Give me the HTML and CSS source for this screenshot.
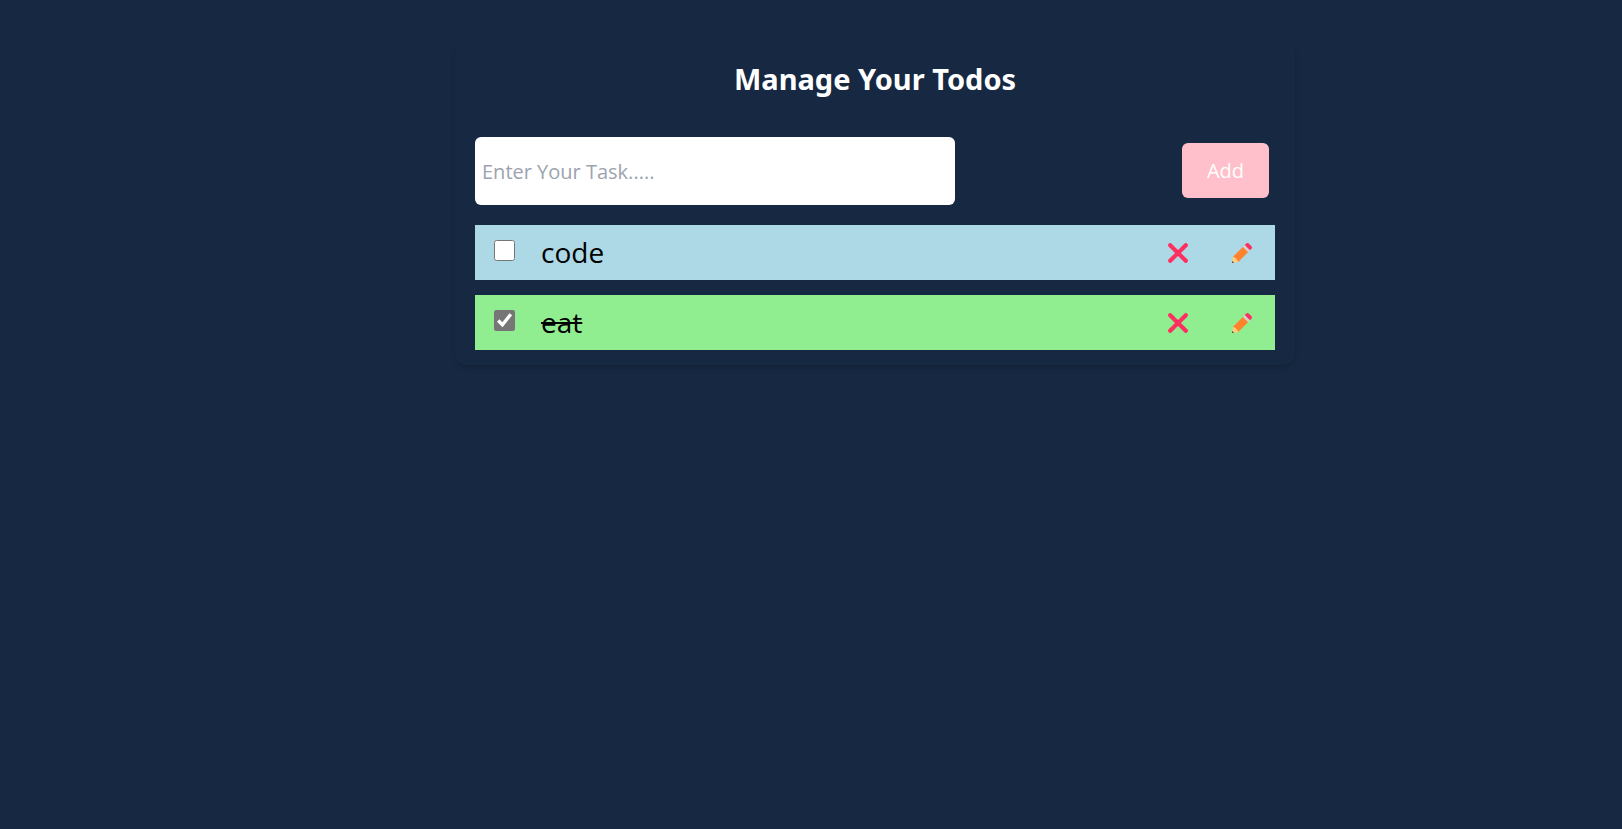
FILE: index.html
```html
<!DOCTYPE html>
<html lang="en">
<head>
<meta charset="utf-8">
<meta name="viewport" content="width=device-width, initial-scale=1">
<title>Manage Your Todos</title>
<link rel="stylesheet" href="styles.css">
</head>
<body>
<svg class="sprite" aria-hidden="true">
  <symbol id="cross" viewBox="0 0 20 20">
    <path d="M2.2 2.2 17.8 17.8M17.8 2.2 2.2 17.8" stroke="#ff2f5f" stroke-width="4.2" stroke-linecap="round"/>
  </symbol>
  <symbol id="pencil" viewBox="0 0 20 20">
    <path d="M0 20 1 14 3 12.4 7.6 17 6 19Z" fill="#ffce7c"/>
    <path d="M0 20 .4 18 2 19.6Z" fill="#402a32"/>
    <path d="M1 13.8 11 3.8 16.2 9 6.2 19Q5.9 17.3 4.3 15.7 2.7 14.1 1 13.8Z" fill="#ff822d"/>
    <path d="M10.9 3.9 13 1.8 18.2 7 16.1 9.1Z" fill="#d3d3d3"/>
    <path d="M12.8 2 14.2 .6Q15.6-.6 17 .7L19.3 3Q20.6 4.4 19.4 5.8L18 7.2Z" fill="#ff2f5f"/>
  </symbol>
</svg>
<main class="page">
  <section class="card">
    <h1 class="title">Manage Your Todos</h1>
    <form class="entry">
      <input class="entry-input" type="text" placeholder="Enter Your Task....." aria-label="Task">
      <button class="entry-add" type="button">Add</button>
    </form>
    <ul class="todos">
      <li class="todo">
        <input class="todo-check" type="checkbox" id="todo-code">
        <label class="todo-text" for="todo-code">code</label>
        <button class="todo-action" type="button" aria-label="Delete code"><svg class="icon"><use href="#cross"/></svg></button>
        <button class="todo-action" type="button" aria-label="Edit code"><svg class="icon"><use href="#pencil"/></svg></button>
      </li>
      <li class="todo todo-done">
        <input class="todo-check" type="checkbox" id="todo-eat" checked>
        <label class="todo-text" for="todo-eat">eat</label>
        <button class="todo-action" type="button" aria-label="Delete eat"><svg class="icon"><use href="#cross"/></svg></button>
        <button class="todo-action" type="button" aria-label="Edit eat"><svg class="icon"><use href="#pencil"/></svg></button>
      </li>
    </ul>
  </section>
</main>
</body>
</html>
```
FILE: styles.css
```css
* { box-sizing: border-box; margin: 0; padding: 0; }

body {
  background: #172842;
  font-family: "Segoe UI", "Open Sans", "Noto Sans", sans-serif;
}

input, button { font: inherit; border: 0; }
button { cursor: pointer; }

.sprite { display: none; }

.page { padding: 40px 0 40px 128px; }

.card {
  max-width: 840px;
  margin: 0 auto;
  padding: 16px 20px 15px;
  border-radius: 12px;
  box-shadow: 0 4px 6px -1px rgb(0 0 0 / 10%), 0 2px 4px -2px rgb(0 0 0 / 10%);
}

.title {
  margin-bottom: 36px;
  color: #fff;
  font-family: "Segoe UI", "Noto Sans", sans-serif;
  font-size: 29px;
  font-weight: 700;
  line-height: 45px;
  text-align: center;
}

.entry {
  display: flex;
  align-items: flex-start;
  justify-content: space-between;
  margin-bottom: 20px;
  padding-right: 6px;
}

.entry-input {
  width: 60.5%;
  height: 68px;
  padding: 0 7px;
  border-radius: 6px;
  background: #fff;
  color: #000;
  font-size: 20px;
}

.entry-input::placeholder { color: #9ca3af; opacity: 1; }

.entry-add {
  margin-top: 6px;
  padding: 1px 25px 0;
  border-radius: 6px;
  background: #ffc0cb;
  color: #fff;
  font-size: 20px;
  line-height: 54px;
}

.todos {
  display: grid;
  gap: 15px;
  list-style: none;
}

.todo {
  display: flex;
  align-items: center;
  height: 55px;
  padding: 0 13px 0 19px;
  background: #add8e6;
}

.todo-done { background: #90ee90; }

.todo-check {
  align-self: flex-start;
  width: 21px;
  height: 21px;
  margin: 15px 26px 0 0;
  accent-color: #767676;
}

.todo-text {
  flex: 1;
  padding-bottom: 2px;
  color: #000;
  font-size: 28px;
}

.todo-done .todo-text { text-decoration: line-through; }

.todo-action {
  display: flex;
  margin-left: 24px;
  padding: 10px;
  background: none;
}

.icon {
  width: 20px;
  height: 20px;
}
```
